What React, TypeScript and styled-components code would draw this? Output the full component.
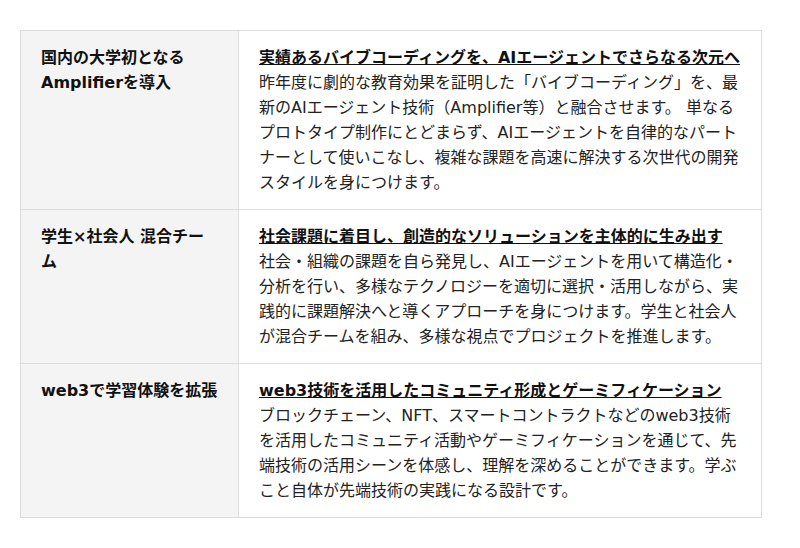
import React from "react";
import styled, { createGlobalStyle } from "styled-components";

const Global = createGlobalStyle`
  html, body { margin: 0; padding: 0; background: #fff; }
  body { font-family: "DejaVu Sans", "Noto Sans CJK JP", sans-serif; }
`;

const Page = styled.div`
  padding: 30px 20px;
`;

const Table = styled.div`
  width: 742px;
  box-sizing: border-box;
  display: grid;
  grid-template-columns: 218px 1fr;
  border-top: 1px solid #dcdcdc;
  border-left: 1px solid #dcdcdc;
`;

const Cell = styled.div<{ $head?: boolean }>`
  box-sizing: border-box;
  padding: 14px 20px;
  border-right: 1px solid #dcdcdc;
  border-bottom: 1px solid #dcdcdc;
  background: ${(p) => (p.$head ? "#f4f4f4" : "#fff")};
  font-size: 16px;
  line-height: 25px;
  color: #222;
  line-break: strict;
`;

const RowTitle = styled.div`
  font-weight: bold;
  color: #111;
`;

const Heading = styled.div`
  font-weight: bold;
  color: #111;
  text-decoration: underline;
`;

const Body = styled.div`
  color: #222;
`;

const rows = [
  {
    title: "国内の大学初となるAmplifierを導入",
    heading: "実績あるバイブコーディングを、AIエージェントでさらなる次元へ",
    body:
      "昨年度に劇的な教育効果を証明した「バイブコーディング」を、最新のAIエージェント技術（Amplifier等）と融合させます。 単なるプロトタイプ制作にとどまらず、AIエージェントを自律的なパートナーとして使いこなし、複雑な課題を高速に解決する次世代の開発スタイルを身につけます。",
  },
  {
    title: "学生×社会人 混合チーム",
    heading: "社会課題に着目し、創造的なソリューションを主体的に生み出す",
    body:
      "社会・組織の課題を自ら発見し、AIエージェントを用いて構造化・分析を行い、多様なテクノロジーを適切に選択・活用しながら、実践的に課題解決へと導くアプローチを身につけます。学生と社会人が混合チームを組み、多様な視点でプロジェクトを推進します。",
  },
  {
    title: "web3で学習体験を拡張",
    heading: "web3技術を活用したコミュニティ形成とゲーミフィケーション",
    body:
      "ブロックチェーン、NFT、スマートコントラクトなどのweb3技術を活用したコミュニティ活動やゲーミフィケーションを通じて、先端技術の活用シーンを体感し、理解を深めることができます。学ぶこと自体が先端技術の実践になる設計です。",
  },
];

export default function App() {
  return (
    <>
      <Global />
      <Page>
        <Table>
          {rows.map((r) => (
            <React.Fragment key={r.title}>
              <Cell $head>
                <RowTitle>{r.title}</RowTitle>
              </Cell>
              <Cell>
                <Heading>{r.heading}</Heading>
                <Body>{r.body}</Body>
              </Cell>
            </React.Fragment>
          ))}
        </Table>
      </Page>
    </>
  );
}
